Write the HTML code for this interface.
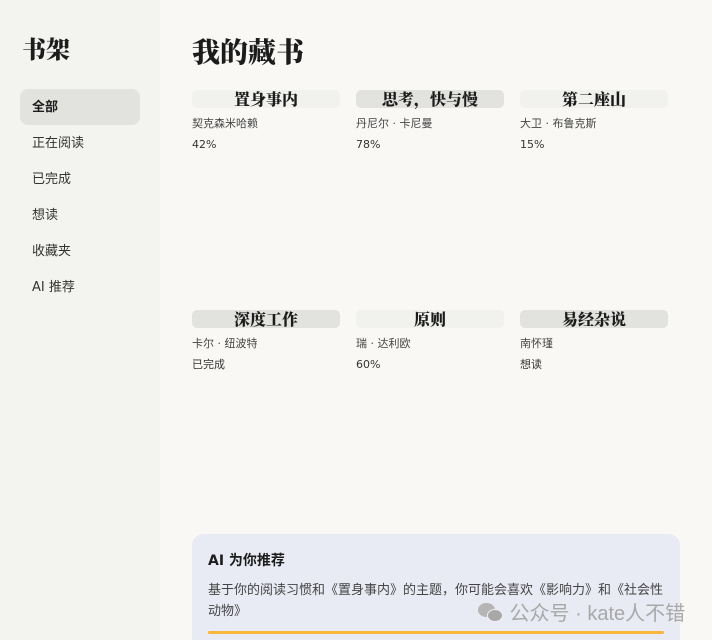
<!DOCTYPE html>
<html><head><meta charset="utf-8"><style>
*{margin:0;padding:0;box-sizing:border-box}
html,body{width:712px;height:640px;overflow:hidden}
body{background:#f9f8f5;font-family:"DejaVu Sans","Noto Sans CJK SC",sans-serif;color:#222;position:relative}
.side{position:absolute;left:0;top:0;width:160px;height:640px;background:#f3f3ef}
.side h1{position:absolute;left:22px;top:30px;font-family:"Liberation Serif","Noto Serif CJK SC",serif;font-size:24px;font-weight:900;color:#1c1c1c}
.nav{position:absolute;left:20px;width:120px;height:36px;line-height:37px;padding-left:12px;font-size:13px;color:#333;border-radius:8px}
.nav.a{background:#e2e2de;font-weight:bold;color:#1c1c1c}
.main h2{position:absolute;left:192px;top:31px;font-family:"Liberation Serif","Noto Serif CJK SC",serif;font-size:28px;font-weight:900;color:#1c1c1c}
.card{position:absolute;width:148px}
.t{height:18px;border-radius:5px;text-align:center;font-family:"Liberation Serif","Noto Serif CJK SC",serif;font-weight:900;font-size:16px;line-height:22px;color:#1c1c1c;overflow:visible}
.l{background:#f1f1ed}.d{background:#e2e2de}
.au{font-size:11px;color:#444;margin-top:9px;line-height:14px}
.p{font-size:11px;color:#333;margin-top:7px;line-height:14px}
.ai{position:absolute;left:192px;top:534px;width:488px;height:106px;background:#e9ebf4;border-radius:12px 12px 0 0}
.ai b{position:absolute;left:16px;top:16px;font-size:14px;color:#1c1c1c}
.ai p{position:absolute;left:16px;top:46px;width:462px;font-size:13px;line-height:21px;color:#444}
.bar{position:absolute;left:16px;top:97px;width:456px;height:3px;background:#f8b739;border-radius:2px}
.wm{position:absolute;left:478px;top:597px;font-size:20px;color:#a8a8a8;white-space:nowrap;font-family:"Liberation Sans","Noto Sans CJK SC",sans-serif}
</style></head><body>
<div class="side"><h1>书架</h1>
<div class="nav a" style="top:89px">全部</div>
<div class="nav" style="top:125px">正在阅读</div>
<div class="nav" style="top:161px">已完成</div>
<div class="nav" style="top:197px">想读</div>
<div class="nav" style="top:233px">收藏夹</div>
<div class="nav" style="top:269px">AI 推荐</div>
</div>
<div class="main"><h2>我的藏书</h2>
<div class="card" style="left:192px;top:90px"><div class="t l">置身事内</div><div class="au">契克森米哈赖</div><div class="p">42%</div></div>
<div class="card" style="left:356px;top:90px"><div class="t d">思考，快与慢</div><div class="au">丹尼尔 · 卡尼曼</div><div class="p">78%</div></div>
<div class="card" style="left:520px;top:90px"><div class="t l">第二座山</div><div class="au">大卫 · 布鲁克斯</div><div class="p">15%</div></div>
<div class="card" style="left:192px;top:310px"><div class="t d">深度工作</div><div class="au">卡尔 · 纽波特</div><div class="p">已完成</div></div>
<div class="card" style="left:356px;top:310px"><div class="t l">原则</div><div class="au">瑞 · 达利欧</div><div class="p">60%</div></div>
<div class="card" style="left:520px;top:310px"><div class="t d">易经杂说</div><div class="au">南怀瑾</div><div class="p">想读</div></div>
<div class="ai"><b>AI 为你推荐</b><p>基于你的阅读习惯和《置身事内》的主题，你可能会喜欢《影响力》和《社会性动物》</p><div class="bar"></div></div>
</div>
<div class="wm"><span style="display:inline-block;width:26px;height:20px;vertical-align:-3px;position:relative"><span style="position:absolute;left:0;top:0;width:17px;height:14px;border-radius:50%;background:#b5b5b5"></span><span style="position:absolute;left:9px;top:6px;width:16px;height:13px;border-radius:50%;background:#a8a8a8;border:1px solid #f0f0f0"></span></span> 公众号 · kate人不错</div>
</body></html>
